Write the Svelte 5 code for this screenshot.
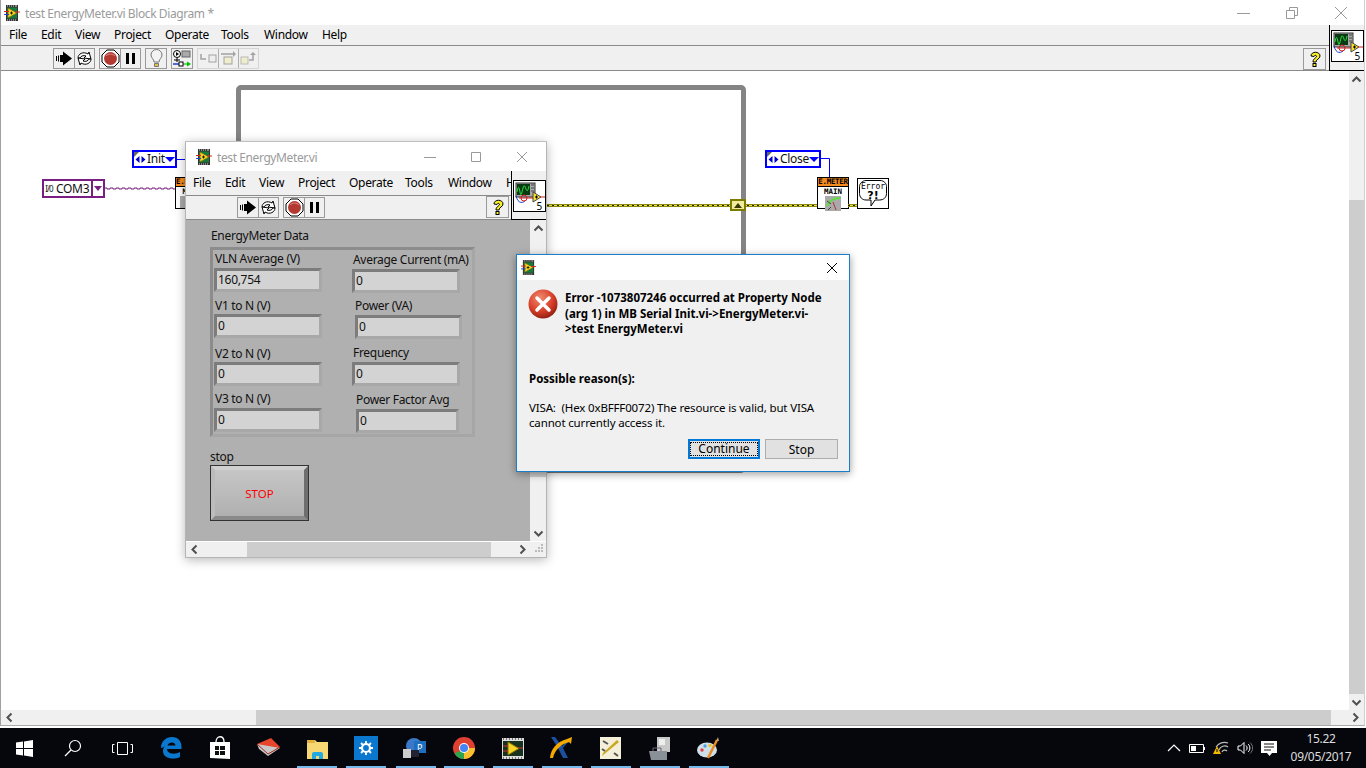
<script>
  const mainMenu = ['File','Edit','View','Project','Operate','Tools','Window','Help'];
  const panelMenu = ['File','Edit','View','Project','Operate','Tools','Window','H'];
  const fields = [
    { label:'VLN Average (V)', value:'160,754', x:214, y:268, w:108, h:24, lx:215, ly:250 },
    { label:'V1 to N (V)', value:'0', x:214, y:314, w:108, h:24, lx:215, ly:297 },
    { label:'V2 to N (V)', value:'0', x:214, y:362, w:108, h:24, lx:215, ly:345 },
    { label:'V3 to N (V)', value:'0', x:214, y:408, w:108, h:24, lx:215, ly:390 },
    { label:'Average Current (mA)', value:'0', x:352, y:269, w:108, h:24, lx:353, ly:251 },
    { label:'Power (VA)', value:'0', x:355, y:315, w:107, h:24, lx:355, ly:297 },
    { label:'Frequency', value:'0', x:352, y:362, w:108, h:24, lx:353, ly:344 },
    { label:'Power Factor Avg', value:'0', x:356, y:409, w:103, h:24, lx:356, ly:391 }
  ];
  const indicators = [297,346,396,444,493,542,591,640,689];
  const purpleWire = 'M0 1' + 'h3v1h3v-1'.repeat(12);
</script>

{#snippet lvSmall(s)}
  <svg width={s} height={s} viewBox="0 0 16 16" class="ico">
    <rect x="2" y="0" width="12" height="16" fill="#333"/>
    <path d="M3 1h1M5 1h1M7 1h1M9 1h1M11 1h1M13 1h-1M3 15h1M5 15h1M7 15h1M9 15h1M11 15h1" stroke="#ddd"/>
    <rect x="3" y="2.5" width="10" height="11" fill="#157b3a"/>
    <path d="M4 3l9 5-9 5z" fill="#f5d327" stroke="#6b5a00" stroke-width=".6"/>
    <path d="M6 8h3M7.5 6.5v3" stroke="#000" stroke-width=".8"/>
    <path d="M0 6.5h5" stroke="#e02020"/><path d="M11 7h5" stroke="#e02020"/><path d="M0 9.5h5" stroke="#1c3fd0"/>
  </svg>
{/snippet}

{#snippet viIcon()}
  <svg width="33" height="32" viewBox="0 0 33 32" class="ico">
    <rect x=".5" y=".5" width="32" height="31" fill="#fff" stroke="#000"/>
    <rect x="3" y="3" width="19" height="14" fill="#aaa" stroke="#333"/>
    <rect x="4" y="4" width="13" height="11" fill="#0a3a14"/>
    <path d="M4 12c1-6 2-6 3 0s2 0 3-4 2-2 3 1 2 2 3-3" fill="none" stroke="#28e03c"/>
    <path d="M18 5h3M18 8h3M18 11h3" stroke="#444"/>
    <path d="M3 16c2 8 7 8 11 3" fill="none" stroke="#1c3fd0"/>
    <circle cx="11" cy="18" r="3" fill="none" stroke="#d02020"/>
    <path d="M6 18h14" stroke="#d02020"/>
    <path d="M20 12l8 5-8 5z" fill="#f5e030" stroke="#444"/>
    <path d="M22 17h3M23.5 15.5v3" stroke="#000"/>
    <path d="M27 17h5" stroke="#d02020"/>
    <text x="29" y="29.5" class="five" text-anchor="end">5</text>
  </svg>
{/snippet}

{#snippet tools(small)}
  <div class="tbgroup">
    <div class="tb"><svg width="19" height="19" viewBox="0 0 19 19"><path d="M1 7h1v5H1zM3 6.500h1v6H3zM5 6h3V2.500l9 7-9 7V13H5z" fill="#000"/></svg></div>
    <div class="tb"><svg width="19" height="19" viewBox="0 0 19 19" fill="none" stroke="#000"><path d="M3 9c0-4 5-7 10-4l1-2 2 7-7-1 2-2c-3-1-5 0-6 2z" fill="#fff"/><path d="M16 10c0 4-5 7-10 4l-1 2-2-7 7 1-2 2c3 1 5 0 6-2z" fill="#fff"/></svg></div>
  </div>
  <div class="tbgroup">
    <div class="tb"><svg width="19" height="19" viewBox="0 0 19 19"><path d="M6 1h7l5 5v7l-5 5H6l-5-5V6z" fill="#fff" stroke="#000"/><circle cx="9.500" cy="9.500" r="6.500" fill="#b23a32"/><path d="M5 7c2-2.500 7-2.500 9 0" stroke="#d88" fill="none"/></svg></div>
    <div class="tb"><svg width="19" height="19" viewBox="0 0 19 19"><path d="M5 4h3v11H5zM11 4h3v11h-3z" fill="#000"/></svg></div>
  </div>
  {#if !small}
    <div class="tbgroup"><div class="tb wide"><svg width="19" height="19" viewBox="0 0 19 19" fill="none"><path d="M7 13c0-3-3-4-3-7a5.500 5.500 0 0 1 11 0c0 3-3 4-3 7z" fill="#f3f3f3" stroke="#777"/><path d="M7.500 14.500h4v3h-4z" fill="#e8c040" stroke="#777"/></svg></div></div>
    <div class="tbgroup"><div class="tb wide"><svg width="20" height="19" viewBox="0 0 20 19" fill="none"><circle cx="5" cy="5" r="3.500" fill="#fff" stroke="#000"/><path d="M4 3l3 2-3 2z" fill="#000"/><path d="M5 9v4M2 11h6" stroke="#000"/><rect x="10" y="2" width="8" height="6" fill="#aaa" stroke="#666"/><path d="M1 15h6" stroke="#1c3fd0" stroke-width="1.500"/><path d="M11 15h5" stroke="#0a0"/><path d="M15 12.500l4 2.500-4 2.500z" fill="#0b0"/><rect x="7" y="13" width="4" height="4" fill="#fff" stroke="#000"/></svg></div></div>
    <div class="tbgroup dim">
      <div class="tb"><svg width="19" height="19" viewBox="0 0 19 19" fill="none"><path d="M2 5v5h5" stroke="#888" stroke-width="1.500"/><rect x="10" y="6" width="7" height="7" fill="#eee" stroke="#888"/></svg></div>
      <div class="tb"><svg width="19" height="19" viewBox="0 0 19 19" fill="none"><path d="M2 5h12" stroke="#888" stroke-width="1.500"/><rect x="5" y="8" width="8" height="7" fill="#f0ecc0" stroke="#888"/><path d="M14 2l3 3-3 3z" fill="#888"/></svg></div>
      <div class="tb"><svg width="19" height="19" viewBox="0 0 19 19" fill="none"><rect x="2" y="8" width="7" height="7" fill="#f0ecc0" stroke="#aaa"/><path d="M10 11h4V5" stroke="#888" stroke-width="1.500"/><path d="M11 6l3-3 3 3z" fill="#888"/></svg></div>
    </div>
  {/if}
{/snippet}

{#snippet helpBtn()}
  <div class="help"><svg width="18" height="18" viewBox="0 0 18 18"><path d="M5 6c0-5 9-5 9 0 0 3-4 3-4 6H7c0-4 4-4 3.500-6-.5-1-2-1-2.500.5z" fill="#f7ee2a" stroke="#000"/><rect x="7" y="13.500" width="3" height="3" fill="#f7ee2a" stroke="#000"/></svg></div>
{/snippet}

{#snippet arrow(dir)}
  <svg class="arrow" width="11" height="11" viewBox="0 0 11 11" style="transform:rotate({dir}deg)"><path d="M1.500 7.500L5.500 3.500l4 4" fill="none" stroke="#505050" stroke-width="2"/></svg>
{/snippet}

{#snippet spin()}
  <svg class="spin" width="11" height="9" viewBox="0 0 11 9"><path d="M4.500 1v7L.5 4.500zM6.500 1v7l4-3.500z" fill="#0000c8"/></svg>
{/snippet}

<div class="desktop">
  <!-- Block diagram window -->
  <section class="main">
    <header class="title mainTitle">
      {@render lvSmall(16)}
      <span class="ttext">test EnergyMeter.vi Block Diagram *</span>
      <div class="caption">
        <svg width="13" height="14" viewBox="0 0 13 14"><path d="M0 7.500h13" stroke="#999"/></svg>
        <svg width="12" height="14" viewBox="0 0 12 14" fill="none" stroke="#999"><path d="M.5 4.500h8v8h-8zM3.500 4.500v-3h8v8h-3"/></svg>
        <svg width="14" height="14" viewBox="0 0 14 14"><path d="M1 1l12 12M13 1L1 13" stroke="#999"/></svg>
      </div>
    </header>
    <div class="barwrap">
      <div class="bars">
        <nav class="menu mainMenu">{#each mainMenu as m}<span>{m}</span>{/each}</nav>
        <div class="toolbar mainTools">{@render tools(false)}<div class="spacer"></div>{@render helpBtn()}</div>
      </div>
      <div class="iconcell">{@render viIcon()}</div>
    </div>

    <div class="canvasrow">
      <div class="canvas">
        <div class="loop"></div>
        <div class="wire blue" style="left:175px;top:88px;width:12px"></div>
        <svg class="pwire" style="left:103px;top:116px" width="72" height="3"><path d={purpleWire} fill="none" stroke="#7a1f82"/></svg>
        <div class="enum init" style="left:131px;top:79px;width:45px;height:18px"><i class="corner"></i>{@render spin()}<span>Init</span><em></em></div>
        <div class="ring" style="left:41px;top:108px"><span class="io">I/0</span><span class="com">COM3</span><em></em></div>
        <div class="node partial" style="left:174px;top:106px"><div class="nodehead">E.M</div><div class="nodebody">M</div><div class="stub"></div></div>

        <div class="wire yellow" style="left:546px;top:133px;width:271px"></div>
        <div class="shift" style="left:729px;top:128px"><i></i></div>
        <div class="enum" style="left:764px;top:79px;width:56px;height:18px"><i class="corner"></i>{@render spin()}<span>Close</span><em></em></div>
        <svg class="bluewire" style="left:819px;top:85px" width="12" height="22"><path d="M0 2.500h9.500V22" fill="none" stroke="#0000ff"/></svg>
        <div class="node" style="left:816px;top:106px">
          <div class="nodehead">E.METER</div>
          <div class="nodebody">MAIN</div>
          <svg width="16" height="15" viewBox="0 0 16 15" class="gauge"><rect width="16" height="15" fill="#aaa"/><path d="M2 10C4 5 9 2 15 2" stroke="#5fe03c" stroke-width="2" fill="none"/><path d="M8 6l3 8" stroke="#a33"/><path d="M2 5l4 3M3 14l3-3" stroke="#444"/></svg>
        </div>
        <div class="wire yellow" style="left:847px;top:133px;width:10px"></div>
        <div class="errnode" style="left:856px;top:107px">
          <svg width="32" height="31" viewBox="0 0 32 31"><rect x=".5" y=".5" width="31" height="30" fill="#fff" stroke="#000"/><path d="M9 2.500h14c4 0 6.500 3 6.500 6v7c0 4-3 6.500-7 6.500H18l-4 6v-6H9c-4 0-6.500-3-6.500-6.500v-7c0-3 3-6 6.500-6z" fill="#fff" stroke="#000"/><text x="16" y="11" class="errtxt" text-anchor="middle">Error</text><text x="16" y="21" class="errmark" text-anchor="middle">?!</text></svg>
        </div>
      </div>
      <div class="vscroll">
        <div class="sarrow">{@render arrow(0)}</div>
        <div class="track"><div class="vthumb"></div></div>
        <div class="sarrow">{@render arrow(180)}</div>
      </div>
    </div>
    <div class="hscroll">
      <div class="sarrow h">{@render arrow(-90)}</div>
      <div class="htrack"><div class="hthumb"></div></div>
      <div class="sarrow h">{@render arrow(90)}</div>
    </div>
  </section>

  <!-- Front panel window -->
  <section class="panelwin">
    <header class="title panelTitle">
      {@render lvSmall(16)}
      <span class="ttext small">test EnergyMeter.vi</span>
      <div class="caption pc">
        <svg width="12" height="12" viewBox="0 0 12 12"><path d="M0 6.500h12" stroke="#999"/></svg>
        <svg width="12" height="12" viewBox="0 0 12 12" fill="none" stroke="#999"><path d="M1.500 1.500h9v9h-9z"/></svg>
        <svg width="12" height="12" viewBox="0 0 12 12"><path d="M1 1l10 10M11 1L1 11" stroke="#999"/></svg>
      </div>
    </header>
    <div class="barwrap pb">
      <div class="bars">
        <nav class="menu panelMenu">{#each panelMenu as m}<span>{m}</span>{/each}</nav>
        <div class="toolbar panelTools">{@render tools(true)}<div class="spacer"></div>{@render helpBtn()}</div>
      </div>
      <div class="iconcell pcell">{@render viIcon()}</div>
    </div>
    <div class="panelrow">
      <div class="panel">
        <div class="lbl" style="left:25px;top:7px">EnergyMeter Data</div>
        <div class="cluster"></div>
        {#each fields as f}
          <div class="lbl" style="left:{f.lx-186}px;top:{f.ly-220}px">{f.label}</div>
          <div class="field" style="left:{f.x-186}px;top:{f.y-220}px;width:{f.w}px;height:{f.h}px">{f.value}</div>
        {/each}
        <div class="lbl" style="left:24px;top:228px">stop</div>
        <div class="stop"><span>STOP</span></div>
      </div>
      <div class="vscroll pv">
        <div class="sarrow">{@render arrow(0)}</div>
        <div class="track"><div class="pthumb"></div></div>
        <div class="sarrow">{@render arrow(180)}</div>
      </div>
    </div>
    <div class="hscroll ph">
      <div class="sarrow h">{@render arrow(-90)}</div>
      <div class="htrack"><div class="pthumbh"></div></div>
      <div class="sarrow h">{@render arrow(90)}</div>
      <div class="grip"><svg width="14" height="14" viewBox="0 0 14 14" fill="#bbb"><path d="M10 2h2v2h-2zM7 5h2v2H7zM10 5h2v2h-2zM4 8h2v2H4zM7 8h2v2H7zM10 8h2v2h-2z"/></svg></div>
    </div>
  </section>

  <!-- Error dialog -->
  <section class="dialog">
    <header class="dtitle">
      {@render lvSmall(15)}
      <svg class="dclose" width="12" height="12" viewBox="0 0 12 12"><path d="M1 1l10 10M11 1L1 11" stroke="#000"/></svg>
    </header>
    <div class="dbody">
      <div class="errrow">
        <svg width="30" height="30" viewBox="0 0 30 30" class="ico">
          <defs><radialGradient id="rg" cx=".4" cy=".3" r=".8"><stop offset="0" stop-color="#f08a70"/><stop offset=".55" stop-color="#d8402a"/><stop offset="1" stop-color="#7e1608"/></radialGradient></defs>
          <circle cx="15" cy="15" r="14.500" fill="url(#rg)"/>
          <path d="M9 9l12 12M21 9L9 21" stroke="#fff" stroke-width="3.500" stroke-linecap="round"/>
        </svg>
        <p class="errmsg">Error -1073807246 occurred at Property Node<br>(arg 1) in MB Serial Init.vi-&gt;EnergyMeter.vi-<br>&gt;test EnergyMeter.vi</p>
      </div>
      <p class="reason">Possible reason(s):</p>
      <p class="visa">VISA:&nbsp; (Hex 0xBFFF0072) The resource is valid, but VISA<br>cannot currently access it.</p>
      <div class="btns">
        <button class="focus"><span>Continue</span></button>
        <button>Stop</button>
      </div>
    </div>
  </section>

  <!-- Taskbar -->
  <footer class="taskbar">
    <div class="tasks">
      <div class="ti"><svg width="17" height="17" viewBox="0 0 17 17" fill="#fff"><path d="M0 2.500l7-1v6.500H0zM8 1.400l9-1.400v8H8zM0 9h7v6.500l-7-1zM8 9h9v8l-9-1.400z"/></svg></div>
      <div class="ti"><svg width="18" height="18" viewBox="0 0 18 18" fill="none" stroke="#fff" stroke-width="1.200"><circle cx="11" cy="7" r="5.500"/><path d="M7 11l-6 6"/></svg></div>
      <div class="ti"><svg width="21" height="15" viewBox="0 0 21 15" fill="none" stroke="#fff"><path d="M5.500 1.500h10v12h-10zM2.500 3.500H.5v8h2M18.500 3.500h2v8h-2"/></svg></div>
      <div class="ti"><svg width="22" height="22" viewBox="0 0 22 22"><path d="M1 11C1 4 6 0 12 0c6 0 9.500 4 9.500 10v2H7c0 5 8 6 13 3v5c-6 3-17 2-17-6 0-2 .5-3 2-5-1 1-3 2-4 2zM7.500 8.500h8c0-4-7-4-8 0z" fill="#0b78d0"/></svg></div>
      <div class="ti"><svg width="22" height="24" viewBox="0 0 22 24"><path d="M7 6c0-7 8-7 8 0" fill="none" stroke="#fff" stroke-width="1.300"/><path d="M1 6h20v17L1 22z" fill="#fff"/><path d="M6 10h4v4H6zM11 10h5v4h-5zM6 15h4v4H6zM11 15h5v4h-5z" fill="#111"/></svg></div>
      <div class="ti"><svg width="24" height="20" viewBox="0 0 24 20"><path d="M0 6L14 0l9 9-12 8z" fill="#e8462c"/><path d="M0 6l2 5 9 7 12-8" fill="#c9c9c9"/><path d="M0 6l11 10 12-7" fill="none" stroke="#a02818"/></svg></div>
      <div class="ti"><svg width="23" height="21" viewBox="0 0 23 21"><path d="M1 2h8l2 2h11v17H1z" fill="#f7d774"/><path d="M1 2h8v3H1z" fill="#e0b040"/><path d="M6 21v-5a2 2 0 0 1 2-2h7a2 2 0 0 1 2 2v5h-4v-3h-3v3z" fill="#23a9e0"/></svg></div>
      <div class="ti"><div class="gearbox"><svg width="14" height="14" viewBox="0 0 14 14"><circle cx="7" cy="7" r="4" fill="none" stroke="#fff" stroke-width="2.200"/><path d="M7 0v2.500M7 11.500V14M0 7h2.500M11.500 7H14M2 2l2 2M10 10l2 2M12 2l-2 2M4 10l-2 2" stroke="#fff" stroke-width="1.800"/></svg></div></div>
      <div class="ti"><svg width="24" height="22" viewBox="0 0 24 22"><circle cx="11" cy="9" r="8" fill="#3a78c8"/><rect x="11" y="4" width="12" height="12" fill="#1f6fc0"/><text x="14" y="14" class="ptxt">P</text><rect x="0" y="12" width="8" height="9" fill="#ccc"/><rect x="8" y="13" width="8" height="7" fill="#223"/></svg></div>
      <div class="ti"><svg width="22" height="22" viewBox="0 0 22 22"><circle cx="11" cy="11" r="11" fill="#e04030"/><path d="M11 11L1.500 16.500A11 11 0 0 0 11 22z" fill="#2da44e"/><path d="M11 11h11a11 11 0 0 1-11 11z" fill="#fbc02d"/><path d="M1 6l5 9 5-4z" fill="#e04030"/><circle cx="11" cy="11" r="5" fill="#fff"/><circle cx="11" cy="11" r="4" fill="#4285f4"/></svg></div>
      <div class="ti"><svg width="22" height="21" viewBox="0 0 22 21"><rect width="22" height="21" fill="#ddd"/><path d="M1 1h1M4 1h1M7 1h1M10 1h1M13 1h1M16 1h1M19 1h1M1 20h1M4 20h1M7 20h1M10 20h1M13 20h1M16 20h1M19 20h1" stroke="#111"/><rect x="1" y="3" width="20" height="15" fill="#17331f"/><path d="M6 4l11 6.500L6 17z" fill="#f5d327" stroke="#8a7000"/><path d="M1 8h5M1 13h5M16 10h5" stroke="#c33"/></svg></div>
      <div class="ti"><svg width="23" height="22" viewBox="0 0 23 22"><path d="M1 0h4l7 9 10-9-3 6-1-1-5 6 5 10h-5L8 11z" fill="#1c4fa0"/><path d="M0 21c1-10 7-16 17-19l5-2-1 7-2-2C12 7 5 12 3 21z" fill="#f5a800"/></svg></div>
      <div class="ti"><svg width="21" height="22" viewBox="0 0 21 22"><rect width="21" height="22" fill="#f3efd8"/><path d="M2 19L19 5l-2-2L3 16z" fill="#c9a820"/><path d="M3 4l5 3M14 16l4 3M2 12l3 2" stroke="#555" stroke-width="2"/></svg></div>
      <div class="ti"><svg width="22" height="23" viewBox="0 0 22 23"><path d="M8 0h13v15H8z" fill="#c8c8c8"/><rect x="10" y="2" width="6" height="6" fill="#eee"/><path d="M0 14h18v9H2z" fill="#8a9098"/><path d="M4 14v-3h8v3" fill="none" stroke="#667"/></svg></div>
      <div class="ti"><svg width="23" height="22" viewBox="0 0 23 22"><ellipse cx="10" cy="13" rx="10" ry="7.500" fill="#cfe0ea"/><circle cx="5" cy="13" r="1.700" fill="#e04040"/><circle cx="8" cy="9" r="1.700" fill="#4aa0d8"/><circle cx="13" cy="8.500" r="1.700" fill="#f0c030"/><path d="M11 21L20 3" stroke="#e88a20" stroke-width="2.500"/><path d="M19 4l2-4 1 4z" fill="#c8a070"/></svg></div>
    </div>
    {#each indicators as x}<i class="ind" style="left:{x}px"></i>{/each}
    <div class="tray">
      <svg width="14" height="8" viewBox="0 0 14 8"><path d="M1 7l6-6 6 6" fill="none" stroke="#fff" stroke-width="1.200"/></svg>
      <svg width="16" height="9" viewBox="0 0 16 9"><path d="M.5.500h14v8H.5z" fill="none" stroke="#fff"/><path d="M2 2h5v5H2z" fill="#fff"/><path d="M15 3h1v3h-1z" fill="#fff"/></svg>
      <svg width="16" height="14" viewBox="0 0 16 14"><path d="M3 6a10 10 0 0 1 12-4M6 9a6 6 0 0 1 9-3M9 11a3 3 0 0 1 5-1" fill="none" stroke="#bbb" stroke-width="1.200"/><path d="M4 5l4 8H0z" fill="#f5b800"/><path d="M4 8v3" stroke="#000"/></svg>
      <svg width="16" height="14" viewBox="0 0 16 14" fill="none" stroke="#fff"><path d="M1 5h2.500L7 1.500v11L3.500 9H1zM9 4.500c1.500 1.500 1.500 3.500 0 5M11 3c2.500 2 2.500 6 0 8" /><path d="M13 1.500c3.500 3 3.500 8 0 11" stroke="#777"/></svg>
      <svg width="17" height="17" viewBox="0 0 17 17"><path d="M0 1h16v12h-5l-2.500 3-2.500-3H0z" fill="#fff"/><path d="M3 4h10M3 7h10M3 10h7" stroke="#111"/></svg>
    </div>
    <div class="clock"><span>15.22</span><span>09/05/2017</span></div>
  </footer>
</div>

<style>
  :global(body){margin:0;background:#fff;font-family:"Noto Sans","Open Sans",sans-serif;overflow:hidden}
  .desktop{position:relative;width:1366px;height:768px;overflow:hidden;background:#fff;font-size:12px;color:#000;letter-spacing:-.3px}
  .ico{display:block;flex:none}
  .main{position:absolute;left:0;top:0;width:1365px;height:726px;display:flex;flex-direction:column;box-sizing:border-box;border-left:1px solid #a0a0a0;border-right:1px solid #d0d0d0;border-bottom:1px solid #aaa;background:#fff}
  .title{display:flex;align-items:center;background:#fff;flex:none;position:relative}
  .mainTitle{height:25px;padding-left:3px;gap:5px}
  .ttext{color:#9b9b9b;font-size:12px;white-space:nowrap;letter-spacing:-.4px;padding-top:1px}
  .caption{margin-left:auto;display:flex;align-items:center}
  .mainTitle .caption{gap:36px;padding-right:16px;padding-top:0}
  .barwrap{display:flex;flex:none;background:#f0f0f0;border-bottom:1px solid #8a8a8a;height:46px;box-sizing:border-box;position:relative}
  .bars{flex:1;min-width:0;display:flex;flex-direction:column;overflow:hidden}
  .menu{display:grid;grid-template-columns:32px 34px 39px 51px 56px 43px 58px auto;height:20px;box-sizing:border-box;padding-bottom:2px;align-items:center;white-space:nowrap;justify-content:start;flex:none}
  .mainMenu{padding-left:8px}
  .toolbar{display:flex;flex:1;align-items:center;gap:4px;border-top:1px solid #8a8a8a;background:#f0f0f0;box-sizing:border-box;min-height:0}
  .mainTools{padding:1px 3px 0 52px}
  .spacer{flex:1}
  .tbgroup{display:flex;border:1px solid #9a9a9a;background:#f0f0f0}
  .tbgroup.dim{border-color:#ccc;opacity:.75;margin-left:0}
  .tb{width:20px;height:19px;display:flex;align-items:center;justify-content:center;box-sizing:border-box}
  .tb + .tb{border-left:1px solid #9a9a9a}
  .tb.wide{width:20px}
  .help{width:21px;height:20px;border:1px solid #9a9a9a;display:flex;align-items:center;justify-content:center}
  .iconcell{width:35px;flex:none;border-left:1px solid #000;border-bottom:1px solid #000;margin-bottom:-1px;display:flex;justify-content:center;padding-top:5px;box-sizing:border-box;background:#f0f0f0;position:relative;z-index:1}
  .canvasrow{flex:1;display:flex;min-height:0}
  .canvas{flex:1;position:relative;overflow:hidden;background:#fff}
  .vscroll{width:15px;flex:none;display:flex;flex-direction:column;background:#f0f0f0}
  .sarrow{height:16px;display:flex;align-items:center;justify-content:center;flex:none}
  .sarrow.h{width:17px;height:auto}
  .track{flex:1;position:relative;min-height:0}
  .vthumb{position:absolute;left:0;right:0;top:113px;bottom:0;background:#cdcdcd}
  .hscroll{height:15px;flex:none;display:flex;background:#f0f0f0}
  .htrack{flex:1;position:relative}
  .hthumb{position:absolute;top:0;bottom:0;left:238px;right:16px;background:#cdcdcd}
  .arrow{display:block}

  .loop{position:absolute;left:235px;top:14px;width:510px;height:388px;box-sizing:border-box;border:5px solid #848484;border-radius:5px}
  .wire{position:absolute;height:3px}
  .wire.blue{background:#0000ff;height:1px}
  .pwire{position:absolute;display:block}
  .wire.yellow{background:repeating-linear-gradient(90deg,#222200 0 2px,#ece83a 2px 5px);border-top:1px solid #8a8a10;border-bottom:1px solid #8a8a10;height:1px}
  .enum{position:absolute;box-sizing:border-box;border:2px solid #0000ff;background:#fff;display:flex;align-items:center;font-size:12px;padding-left:1px;overflow:hidden;color:#111}
  .spin{flex:none;display:block;margin-right:1px}
  .enum span{flex:1;line-height:1}
  .enum em{width:0;height:0;border:5px solid transparent;border-top:5px solid #0000ff;border-bottom:0;margin-right:2px;flex:none}
  .corner{position:absolute;left:0;top:0;width:0;height:0;border-top:5px solid #666;border-right:5px solid transparent}
  .ring{position:absolute;width:63px;height:19px;box-sizing:border-box;border:2px solid #7a1f82;background:#fff;display:flex;align-items:center;font-size:12px;color:#111}
  .io{font-size:8px;width:10px;text-align:center;flex:none;letter-spacing:-1px}
  .com{flex:1;padding-left:2px;line-height:1}
  .ring em{width:12px;height:100%;border-left:2px solid #7a1f82;box-sizing:border-box;position:relative;flex:none}
  .ring em::after{content:"";position:absolute;left:1px;top:5px;border:4px solid transparent;border-top:5px solid #7a1f82;border-bottom:0}
  .node{position:absolute;width:32px;height:32px;box-sizing:border-box;border:1px solid #000;background:#fff;font-size:7px;line-height:1;letter-spacing:0}
  .nodehead{background:#f68a1e;color:#000;height:8px;font-family:"DejaVu Sans Mono",monospace;font-size:7.500px;line-height:8px;text-align:center;border-bottom:1px solid #000;white-space:nowrap;overflow:hidden;font-weight:700;letter-spacing:-.3px}
  .nodebody{text-align:center;font-family:"DejaVu Sans Mono",monospace;font-size:7.500px;line-height:9px;font-weight:700;height:9px}
  .gauge{display:block;margin:0 auto}
  .partial{width:12px;border-right:0}
  .partial .nodehead{text-align:left}
  .partial .nodebody{text-align:right}
  .stub{width:7px;height:12px;margin-left:4px;background:#aaa}
  .shift{position:absolute;width:16px;height:12px;box-sizing:border-box;background:#f0ec9e;border:2px solid #7c7c00;display:flex;align-items:center;justify-content:center}
  .shift i{width:0;height:0;border:4px solid transparent;border-bottom:5px solid #3a3a00;border-top:0}
  .bluewire{position:absolute}
  .errnode{position:absolute;width:32px;height:31px}
  .errnode svg{display:block}
  .errtxt{font-family:"DejaVu Sans Mono",monospace;font-size:8px;letter-spacing:0}
  .errmark{font-family:"DejaVu Sans",sans-serif;font-size:11px;font-weight:700;letter-spacing:0}
  .five{font-family:"Noto Sans",sans-serif;font-size:10px}
  .ptxt{font-family:"Noto Sans",sans-serif;font-size:9px;fill:#fff}

  .panelwin{position:absolute;left:185px;top:141px;width:362px;height:417px;box-sizing:border-box;display:flex;flex-direction:column;border:1px solid #b5b5b5;border-top-color:#c0c0c0;box-shadow:0 2px 10px rgba(0,0,0,.28);background:#fff}
  .panelTitle{height:29px;padding-left:10px;gap:5px}
  .ttext.small{font-size:12px}
  .caption.pc{gap:34px;padding-right:18px}
  .barwrap.pb{height:49px}
  .panelMenu{height:24px;padding:0 0 1px 7px}
  .panelTools{padding:0 2px 1px 51px}
  .iconcell.pcell{padding-top:9px}
  .panelrow{flex:1;display:flex;min-height:0}
  .panel{flex:1;position:relative;background:#b0b0b0;overflow:hidden}
  .pv{width:16px}
  .pthumb{position:absolute;left:0;right:0;top:40px;bottom:48px;background:#cdcdcd}
  .ph{height:15px;border-top:1px solid #fff;box-sizing:content-box}
  .pthumbh{position:absolute;top:0;bottom:0;left:44px;right:23px;background:#cdcdcd}
  .grip{width:15px;flex:none}
  .grip svg{display:block}
  .lbl{position:absolute;white-space:nowrap;line-height:17px;color:#111}
  .cluster{position:absolute;left:24px;top:27px;width:265px;height:190px;box-sizing:border-box;border:3px solid;border-color:#8c8c8c #a6a6a6 #a6a6a6 #8c8c8c;background:#b0b0b0}
  .field{position:absolute;box-sizing:border-box;border:3px solid;border-color:#7c7c7c #a8a8a8 #a8a8a8 #7c7c7c;background:#d3d3d3;padding-left:1px;line-height:18px;color:#111}
  .stop{position:absolute;left:24px;top:245px;width:99px;height:56px;box-sizing:border-box;border:1px solid #333;background:linear-gradient(#c8c8c8,#aeaeae);display:flex;align-items:center;justify-content:center;color:#f00}
  .stop::before{content:"";position:absolute;inset:0;border:4px solid;border-color:#d0d0d0 #6e6e6e #8a8a8a #bcbcbc;box-sizing:border-box}
  .stop span{font-size:11.500px;position:relative;letter-spacing:0}

  .dialog{position:absolute;left:516px;top:254px;width:334px;height:218px;box-sizing:border-box;border:1px solid #1a7fc8;box-shadow:0 2px 8px rgba(0,0,0,.4);background:#f0f0f0;display:flex;flex-direction:column;letter-spacing:0}
  .dtitle{height:25px;background:#fff;display:flex;align-items:center;padding-left:4px;flex:none}
  .dclose{margin-left:auto;margin-right:11px}
  .dbody{flex:1;padding:0 11px 12px 11px;display:flex;flex-direction:column;min-height:0}
  .errrow{display:flex;gap:7px;padding-top:8px}
  .errrow svg{margin-top:1px}
  p{margin:0}
  .errmsg{font-weight:700;line-height:15.500px;padding-top:2px;font-size:11.500px;white-space:nowrap}
  .reason{font-weight:700;font-size:11.500px;margin-top:34px;line-height:16px;padding-left:1px}
  .visa{margin-top:13px;line-height:15px;font-size:11.500px;white-space:nowrap;letter-spacing:-.15px;padding-left:1px}
  .btns{margin-top:auto;display:flex;justify-content:flex-end;gap:5px}
  button{font:inherit;font-size:12px;width:73px;height:20px;box-sizing:border-box;border:1px solid #adadad;background:#e1e1e1;padding:0;color:#000}
  button.focus{width:72px;border:2px solid #0078d7;display:flex;align-items:center;justify-content:center}
  button.focus span{display:block;width:100%;line-height:14px;outline:1px dotted #000;outline-offset:-1px}

  .taskbar{position:absolute;left:0;bottom:0;width:1366px;height:40px;background:#05070c;color:#fff;display:flex;align-items:center}
  .tasks{display:flex;position:absolute;left:0;top:0;bottom:0}
  .ti{width:48.860px;height:40px;display:flex;align-items:center;justify-content:center;flex:none}
  .gearbox{width:24px;height:24px;background:#0b78d0;display:flex;align-items:center;justify-content:center}
  .ind{position:absolute;bottom:0;width:40px;height:2px;background:#76b9ed}
  .tray{position:absolute;left:1167px;top:0;bottom:0;display:flex;align-items:center;gap:8px}
  .clock{position:absolute;right:5px;top:2px;width:80px;display:flex;flex-direction:column;align-items:center;color:#ddd;font-size:12px;line-height:18px}
</style>
